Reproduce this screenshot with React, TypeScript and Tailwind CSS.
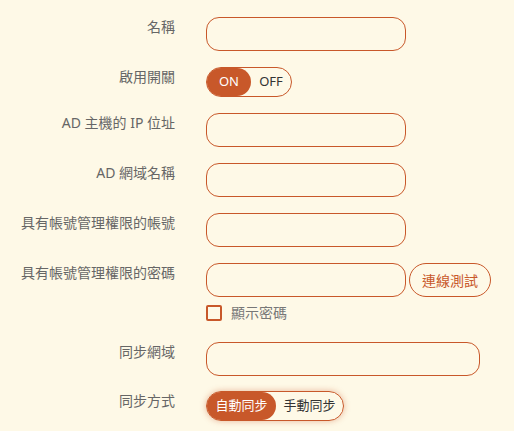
import React from "react";

const font = { fontFamily: '"Noto Sans", "Noto Sans CJK TC", sans-serif' };

function Label({ children }: { children: React.ReactNode }) {
  return (
    <div className="w-[175px] shrink-0 text-right text-[14px] leading-5 text-[#666]">
      {children}
    </div>
  );
}

function Input({ wide }: { wide?: boolean }) {
  return (
    <input
      className={
        (wide ? "w-[274px]" : "w-[200px]") +
        " h-[34px] rounded-[13px] border border-[#c8582a] bg-transparent px-3 text-[14px] outline-none"
      }
    />
  );
}

function Row({ label, children }: { label: string; children: React.ReactNode }) {
  return (
    <div className="flex items-start gap-[31px]">
      <Label>{label}</Label>
      <div>{children}</div>
    </div>
  );
}

export default function App() {
  return (
    <div className="min-h-[431px] w-[514px] bg-[#fef9e7] pt-[17px]" style={font}>
      <div className="flex flex-col gap-4">
        <Row label="名稱">
          <Input />
        </Row>
        <Row label="啟用開關">
          <div className="flex h-[30px] w-[86px] items-center rounded-full border border-[#c8582a] text-[13px]">
            <div className="flex h-full w-[44px] items-center justify-center rounded-full bg-[#c8582a] text-white">
              ON
            </div>
            <div className="flex h-full flex-1 items-center justify-center text-[#333]">OFF</div>
          </div>
        </Row>
        <Row label="AD 主機的 IP 位址">
          <Input />
        </Row>
        <Row label="AD 網域名稱">
          <Input />
        </Row>
        <Row label="具有帳號管理權限的帳號">
          <Input />
        </Row>
        <Row label="具有帳號管理權限的密碼">
          <div className="flex items-center gap-[3px]">
            <Input />
            <button className="h-[34px] w-[82px] rounded-full border border-[#c8582a] text-[14px] text-[#c8582a]">
              連線測試
            </button>
          </div>
          <div className="mt-2 mb-[5px] flex h-4 items-center gap-[9px]">
            <div className="h-4 w-4 rounded-[2px] border-2 border-[#c8582a]" />
            <span className="text-[14px] leading-5 text-[#777]">顯示密碼</span>
          </div>
        </Row>
        <Row label="同步網域">
          <Input wide />
        </Row>
        <div className="-mt-px">
          <Row label="同步方式">
            <div className="flex h-[30px] w-[138px] items-center rounded-full border border-[#c8582a] text-[13px] shadow-[0_0_6px_rgba(200,88,42,0.4)]">
              <div className="flex h-full w-[69px] items-center justify-center rounded-full bg-[#c8582a] text-white">
                自動同步
              </div>
              <div className="flex h-full flex-1 items-center justify-center text-[#333]">手動同步</div>
            </div>
          </Row>
        </div>
      </div>
    </div>
  );
}
